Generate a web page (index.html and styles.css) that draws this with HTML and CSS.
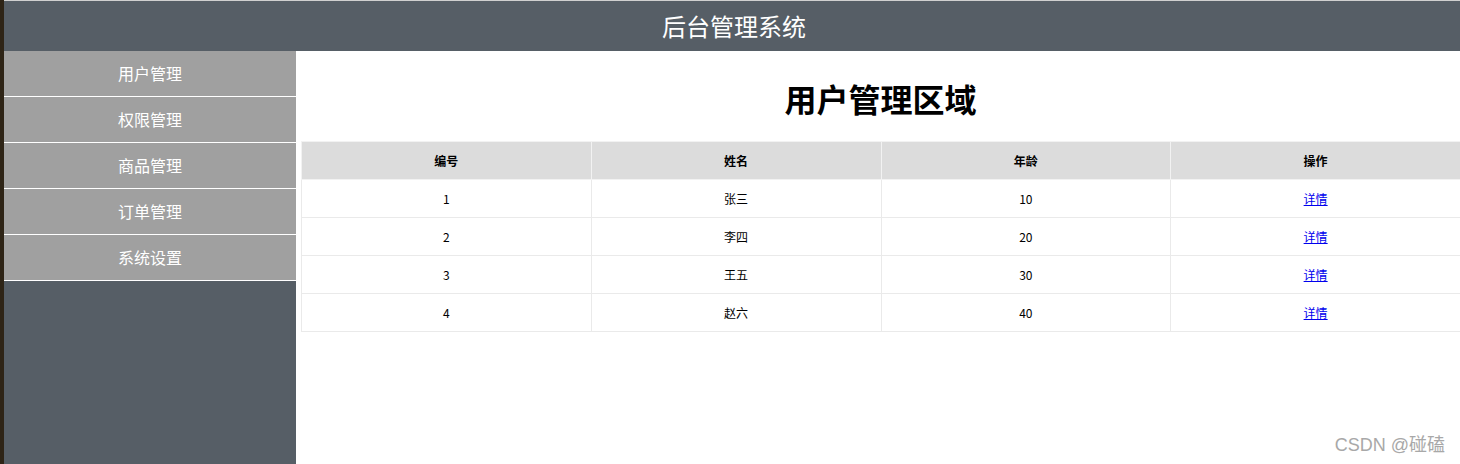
FILE: index.html
```html
<!DOCTYPE html>
<html lang="zh">

<head>
    <meta charset="UTF-8">
    <meta name="viewport" content="width=device-width, initial-scale=1.0">
    <title>后台管理系统</title>
    <link rel="stylesheet" href="styles.css">
</head>

<body>
    <div class="page">
        <div class="header">
            <h1>后台管理系统</h1>
        </div>

        <div class="main">
            <div class="sidebar">
                <div class="menu-item">用户管理</div>
                <div class="menu-item">权限管理</div>
                <div class="menu-item">商品管理</div>
                <div class="menu-item">订单管理</div>
                <div class="menu-item">系统设置</div>
            </div>

            <div class="content">
                <h2>用户管理区域</h2>
                <table>
                    <tr>
                        <th>编号</th>
                        <th>姓名</th>
                        <th>年龄</th>
                        <th>操作</th>
                    </tr>
                    <tr>
                        <td>1</td>
                        <td>张三</td>
                        <td>10</td>
                        <td><a href="#">详情</a></td>
                    </tr>
                    <tr>
                        <td>2</td>
                        <td>李四</td>
                        <td>20</td>
                        <td><a href="#">详情</a></td>
                    </tr>
                    <tr>
                        <td>3</td>
                        <td>王五</td>
                        <td>30</td>
                        <td><a href="#">详情</a></td>
                    </tr>
                    <tr>
                        <td>4</td>
                        <td>赵六</td>
                        <td>40</td>
                        <td><a href="#">详情</a></td>
                    </tr>
                </table>
            </div>
        </div>
    </div>

    <div class="watermark">CSDN @碰磕</div>
</body>

</html>
```

FILE: styles.css
```css
body {
    font-family: "Noto Sans CJK SC", "Noto Sans", sans-serif;
    margin: 0;
    padding: 0;
    background-color: #2e2416;
    overflow: hidden;
}

.page {
    margin-left: 4px;
    height: 464px;
    border-top: 1px solid #d0d0d0;
    box-sizing: border-box;
    display: flex;
    flex-direction: column;
    background-color: #fff;
}

.header {
    background-color: #565e66;
    height: 50px;
    display: flex;
    align-items: center;
    justify-content: center;
}

.header h1 {
    color: #fff;
    margin: 0 0 0 4px;
    font-size: 24px;
    font-weight: normal;
    line-height: 1;
}

.main {
    flex: 1;
    display: flex;
    min-width: 0;
}

.sidebar {
    width: 292px;
    flex-shrink: 0;
    background-color: #565e66;
}

.menu-item {
    height: 45px;
    line-height: 45px;
    background-color: #a0a0a0;
    border-bottom: 1px solid #fff;
    color: #fff;
    font-size: 16px;
    text-align: center;
}

.content {
    flex: 1;
    min-width: 0;
    padding-left: 5px;
}

.content h2 {
    margin: 25px 0 0;
    height: 65px;
    font-size: 32px;
    font-weight: bold;
    text-align: center;
    line-height: 44px;
}

table {
    width: 1160px;
    border-collapse: collapse;
    font-size: 12px;
}

th,
td {
    height: 37px;
    border: 1px solid #eaeaea;
    text-align: center;
    padding: 0;
}

th {
    background-color: #dcdcdc;
    border-color: #f2f2f2;
}

a {
    color: #0000ee;
}

.watermark {
    position: absolute;
    right: 15px;
    bottom: 8px;
    color: #a8a8a8;
    font-family: "Liberation Sans", "Noto Sans CJK SC", sans-serif;
    font-size: 18px;
}
```
